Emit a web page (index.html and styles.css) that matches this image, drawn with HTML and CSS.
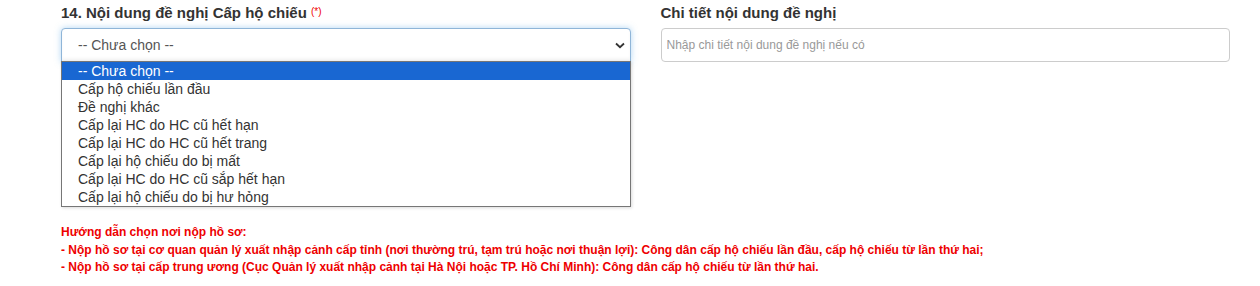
FILE: index.html
```html
<!DOCTYPE html>
<html lang="vi">
<head>
    <meta charset="UTF-8">
    <meta name="viewport" content="width=device-width, initial-scale=1.0">
    <title>Nội dung đề nghị</title>
    <link rel="stylesheet" href="styles.css">
</head>
<body>
    <div class="form">
        <div class="row">
            <div class="col">
                <label class="label">14. Nội dung đề nghị Cấp hộ chiếu <span class="req">(*)</span></label>
                <div class="select-wrap">
                    <select class="control select">
                        <option>-- Chưa chọn --</option>
                    </select>
                    <svg class="chevron" width="10" height="7" viewBox="0 0 10 7">
                        <path d="M1 1.5 L5 5.2 L9 1.5" fill="none" stroke="#333" stroke-width="1.8"/>
                    </svg>
                    <ul class="dropdown">
                        <li class="active">-- Chưa chọn --</li>
                        <li>Cấp hộ chiếu lần đầu</li>
                        <li>Đề nghị khác</li>
                        <li>Cấp lại HC do HC cũ hết hạn</li>
                        <li>Cấp lại HC do HC cũ hết trang</li>
                        <li>Cấp lại hộ chiếu do bị mất</li>
                        <li>Cấp lại HC do HC cũ sắp hết hạn</li>
                        <li>Cấp lại hộ chiếu do bị hư hỏng</li>
                    </ul>
                </div>
            </div>
            <div class="col">
                <label class="label">Chi tiết nội dung đề nghị</label>
                <input class="control input" type="text" placeholder="Nhập chi tiết nội dung đề nghị nếu có">
            </div>
        </div>
        <div class="note">
            Hướng dẫn chọn nơi nộp hồ sơ:<br>
            - Nộp hồ sơ tại cơ quan quản lý xuất nhập cảnh cấp tỉnh (nơi thường trú, tạm trú hoặc nơi thuận lợi): Công dân cấp hộ chiếu lần đầu, cấp hộ chiếu từ lần thứ hai;<br>
            - Nộp hồ sơ tại cấp trung ương (Cục Quản lý xuất nhập cảnh tại Hà Nội hoặc TP. Hồ Chí Minh): Công dân cấp hộ chiếu từ lần thứ hai.
        </div>
    </div>
</body>
</html>
```

FILE: styles.css
```css
*{
    margin: 0;
    padding: 0;
    box-sizing: border-box;
}
body{
    font-family: "Liberation Sans", Arial, sans-serif;
    color: #333;
    background: #fff;
}
.form{
    padding: 0 30px 0 61px;
}
.row{
    display: flex;
    gap: 30px;
}
.col{
    width: 570px;
}
.label{
    display: block;
    font-size: 15px;
    font-weight: bold;
    line-height: 20px;
    padding-top: 3px;
    margin-bottom: 5px;
    color: #333;
}
.req{
    font-size: 10px;
    font-weight: normal;
    color: #e00;
    vertical-align: top;
    position: relative;
    top: -1px;
}
.control{
    display: block;
    width: 100%;
    height: 34px;
    border: 1px solid #ccc;
    border-radius: 4px;
    font-family: inherit;
    background: #fff;
    outline: none;
}
.select-wrap{
    position: relative;
}
.select{
    appearance: none;
    -webkit-appearance: none;
    font-size: 14px;
    color: #555;
    padding-left: 16px;
    border-color: #8fb5d8;
    border-radius: 4px 4px 0 0;
    box-shadow: inset 0 -3px 3px rgba(0,0,0,.04), 0 0 6px rgba(102,175,233,.5);
}
.chevron{
    position: absolute;
    right: 6px;
    top: 14px;
}
.dropdown{
    position: absolute;
    left: 0;
    top: 33px;
    width: 570px;
    list-style: none;
    background: #fff;
    border: 1px solid #767676;
    box-shadow: 1px 1px 3px rgba(0,0,0,.15);
    z-index: 5;
}
.dropdown li{
    height: 18px;
    line-height: 18px;
    font-size: 14px;
    color: #333;
    padding-left: 16px;
}
.dropdown .active{
    background: #1967d2;
    color: #fff;
}
.input{
    font-size: 12px;
    color: #555;
    padding-left: 5px;
}
.input::placeholder{
    color: #999;
}
.note{
    margin-top: 162px;
    font-size: 12px;
    font-weight: bold;
    line-height: 17.5px;
    color: #e00;
}
```
